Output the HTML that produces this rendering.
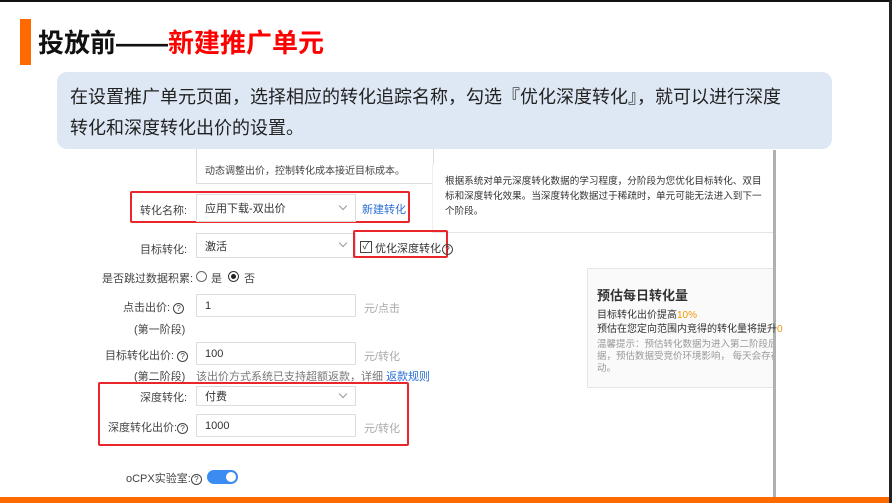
<!DOCTYPE html>
<html><head><meta charset="utf-8"><style>
*{margin:0;padding:0;box-sizing:border-box}
body{width:892px;height:503px;background:#fff;position:relative;overflow:hidden;font-family:"Liberation Sans","Noto Sans CJK SC",sans-serif;color:#333}
.a{position:absolute;white-space:nowrap}
.f{font-size:11px;color:#444}
.inp{position:absolute;border:1px solid #ddd;background:#fff;font-size:11px;color:#333;padding-left:8px;display:flex;align-items:center}
.red{position:absolute;border:2px solid #e8262b;border-radius:2px}
.chev{position:absolute;width:6px;height:6px;border-right:1px solid #999;border-bottom:1px solid #999;transform:rotate(45deg)}
.q{display:inline-block;width:11px;height:11px;border:1px solid #444;border-radius:50%;font-size:8px;line-height:9px;text-align:center;vertical-align:middle}
</style></head><body>
<div class="a" style="left:0;top:0;width:892px;height:2px;background:#111"></div>
<div class="a" style="left:889px;top:0;width:3px;height:503px;background:#222"></div>
<div class="a" style="left:20px;top:19px;width:11px;height:46px;background:#ff6a00"></div>
<div class="a" style="left:38px;top:26px;font-size:26px;font-weight:bold;color:#111;line-height:34px">投放前——<span style="color:#f00">新建推广单元</span></div>
<div class="a" style="left:57px;top:72px;width:775px;height:77px;background:#dde8f4;border-radius:10px"></div>
<div class="a" style="left:70px;top:82px;font-size:18px;line-height:31px;color:#222">在设置推广单元页面，选择相应的转化追踪名称，勾选『优化深度转化』，就可以进行深度<br>转化和深度转化出价的设置。</div>

<div class="a" style="left:773px;top:150px;width:3px;height:347px;background:#b0b0b0"></div>
<div class="a" style="left:196px;top:149px;width:238px;height:35px;border:1px solid #ddd;border-top:none"></div>
<div class="a f" style="left:205px;top:162px;font-size:10px">动态调整出价，控制转化成本接近目标成本。</div>

<div class="a" style="left:432px;top:165px;width:341px;height:68px;background:#fff;border-left:1px solid #eee;border-bottom:1px solid #e5e5e5"></div>
<div class="a f" style="left:445px;top:174px;line-height:15px;font-size:9.6px;color:#333">根据系统对单元深度转化数据的学习程度，分阶段为您优化目标转化、双目<br>标和深度转化效果。当深度转化数据过于稀疏时，单元可能无法进入到下一<br>个阶段。</div>

<div class="red" style="left:130px;top:191px;width:280px;height:32px"></div>
<div class="a f" style="left:140px;top:202px">转化名称:</div>
<div class="inp" style="left:196px;top:194px;width:160px;height:28px">应用下载-双出价</div>
<div class="chev" style="left:340px;top:203px"></div>
<div class="a f" style="left:362px;top:201px;color:#2a6fd6">新建转化</div>

<div class="a f" style="left:140px;top:241px">目标转化:</div>
<div class="inp" style="left:196px;top:233px;width:160px;height:25px">激活</div>
<div class="chev" style="left:340px;top:240px"></div>
<div class="red" style="left:353px;top:230px;width:95px;height:28px"></div>
<div class="a" style="left:360px;top:241px;width:12px;height:12px;border:1px solid #444;font-size:10px;line-height:10px;text-align:center">✓</div>
<div class="a f" style="left:375px;top:240px;color:#333">优化深度转化<span class="q" style="margin-left:1px">?</span></div>

<div class="a f" style="left:102px;top:270px">是否跳过数据积累:</div>
<div class="a" style="left:196px;top:271px;width:11px;height:11px;border:1px solid #666;border-radius:50%"></div>
<div class="a f" style="left:211px;top:270px">是</div>
<div class="a" style="left:228px;top:271px;width:11px;height:11px;border:1px solid #333;border-radius:50%"><div style="width:5px;height:5px;background:#222;border-radius:50%;margin:2px"></div></div>
<div class="a f" style="left:244px;top:270px">否</div>

<div class="a f" style="left:123px;top:299px">点击出价: <span class="q">?</span></div>
<div class="inp" style="left:196px;top:294px;width:160px;height:23px">1</div>
<div class="a f" style="left:364px;top:300px;color:#aaa">元/点击</div>
<div class="a f" style="left:134px;top:321px">(第一阶段)</div>

<div class="a f" style="left:105px;top:347px">目标转化出价: <span class="q">?</span></div>
<div class="inp" style="left:196px;top:342px;width:160px;height:23px">100</div>
<div class="a f" style="left:364px;top:348px;color:#aaa">元/转化</div>
<div class="a f" style="left:134px;top:368px">(第二阶段)</div>
<div class="a f" style="left:196px;top:368px;color:#777">该出价方式系统已支持超额返款，详细 <span style="color:#2a6fd6">返款规则</span></div>

<div class="red" style="left:98px;top:382px;width:311px;height:64px"></div>
<div class="a f" style="left:140px;top:389px">深度转化:</div>
<div class="inp" style="left:196px;top:386px;width:160px;height:20px">付费</div>
<div class="chev" style="left:340px;top:391px"></div>
<div class="a f" style="left:108px;top:419px">深度转化出价:<span class="q">?</span></div>
<div class="inp" style="left:196px;top:414px;width:160px;height:23px">1000</div>
<div class="a f" style="left:364px;top:420px;color:#aaa">元/转化</div>

<div class="a f" style="left:126px;top:470px">oCPX实验室:<span class="q">?</span></div>
<div class="a" style="left:207px;top:470px;width:31px;height:14px;background:#3b8cf2;border-radius:7px"><div style="position:absolute;right:2px;top:2px;width:10px;height:10px;background:#fff;border-radius:50%"></div></div>

<div class="a" style="left:587px;top:268px;width:186px;height:120px;background:#fafafa;border:1px solid #e5e5e5;border-right:none"></div>
<div class="a" style="left:597px;top:285px;font-size:13px;font-weight:bold;color:#333">预估每日转化量</div>
<div class="a f" style="left:597px;top:306px;font-size:10px;color:#333">目标转化出价提高<span style="color:#f39800">10%</span></div>
<div class="a f" style="left:597px;top:320px;font-size:10px;color:#333">预估在您定向范围内竞得的转化量将提升<span style="color:#f39800">0</span></div>
<div class="a f" style="left:597px;top:339px;font-size:9.5px;color:#999;line-height:12px;width:176px;overflow:hidden">温馨提示：预估转化数据为进入第二阶段后<br>据，预估数据受竞价环境影响， 每天会存在<br>动。</div>

<div class="a" style="left:0;top:497px;width:889px;height:6px;background:#ff6a00"></div>
</body></html>
